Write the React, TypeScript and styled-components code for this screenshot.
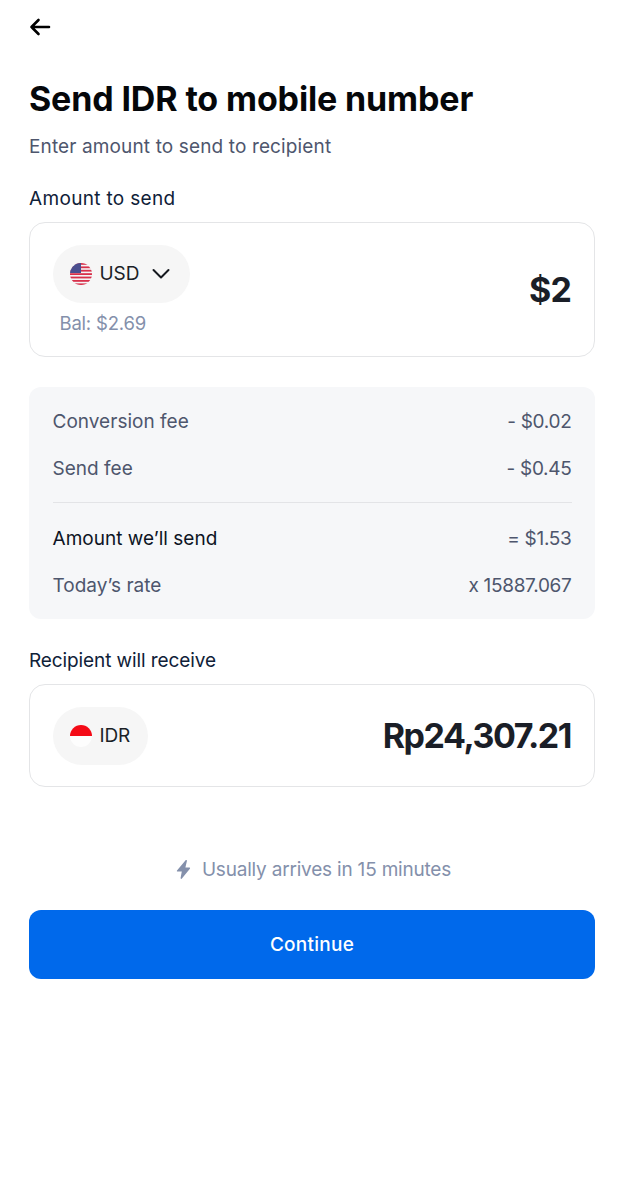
import React from "react";
import styled, { createGlobalStyle } from "styled-components";

const Global = createGlobalStyle`
  html, body { margin: 0; padding: 0; background: #fff; }
  body { font-family: Inter, "Noto Sans", sans-serif; }
`;

const Page = styled.main`
  width: 624px;
  height: 1200px;
  box-sizing: border-box;
  padding: 15px 29px 0 29px;
  display: flex;
  flex-direction: column;
  color: #0d1117;
`;

const BackButton = styled.button`
  width: 22px;
  height: 24px;
  padding: 0;
  border: 0;
  background: none;
  display: flex;
  align-items: center;
  color: #000;
`;

const Title = styled.h1`
  margin: 38px 0 0;
  font-size: 34px;
  line-height: 44px;
  font-weight: 700;
  letter-spacing: -0.14px;
  color: #05070a;
`;

const Subtitle = styled.p`
  margin: 13px 0 0;
  font-size: 19px;
  line-height: 26px;
  letter-spacing: 0.13px;
  color: #4e566d;
`;

const FieldLabel = styled.div<{ $top: number; $track: number }>`
  margin-top: ${(p) => p.$top}px;
  font-size: 19px;
  line-height: 26px;
  letter-spacing: ${(p) => p.$track}px;
  color: #0f2138;
`;

const AmountCard = styled.section<{ $height: number }>`
  margin-top: 10px;
  height: ${(p) => p.$height}px;
  box-sizing: border-box;
  border: 1.5px solid #e4e5e7;
  border-radius: 16px;
  padding: 0 23px 0 22.5px;
  display: flex;
  align-items: center;
  justify-content: space-between;
`;

const CurrencyColumn = styled.div`
  display: flex;
  flex-direction: column;
  align-items: flex-start;
`;

const CurrencyPill = styled.div`
  height: 58px;
  box-sizing: border-box;
  padding: 0 18px 0 17px;
  border-radius: 29px;
  background: #f6f6f6;
  display: flex;
  align-items: center;
  font-size: 19px;
  letter-spacing: -0.1px;
  color: #1b1f27;
`;

const FlagIcon = styled.svg`
  width: 22px;
  height: 22px;
  margin-right: 8px;
  flex: none;
`;

const Chevron = styled.svg`
  width: 20px;
  height: 20px;
  margin-left: 12px;
  margin-right: 1px;
  flex: none;
`;

const Balance = styled.div`
  margin: 8px 0 0 7px;
  font-size: 18.5px;
  line-height: 24px;
  letter-spacing: -0.2px;
  color: #8490ab;
`;

const BigAmount = styled.div<{ $tight?: boolean }>`
  font-size: 34px;
  font-weight: 700;
  letter-spacing: ${(p) => (p.$tight ? "-1.45px" : "-0.9px")};
  color: #1a1e27;
`;

const FeePanel = styled.section`
  margin-top: 30px;
  height: 232px;
  box-sizing: border-box;
  padding: 11px 23.5px 0;
  background: #f6f7f9;
  border-radius: 12px;
  display: flex;
  flex-direction: column;
`;

const FeeRow = styled.div<{ $strong?: boolean }>`
  height: 47px;
  display: flex;
  align-items: center;
  justify-content: space-between;
  font-size: 19px;
  letter-spacing: 0.02px;
  color: ${(p) => (p.$strong ? "#0d1424" : "#4e566d")};
`;

const FeeValue = styled.span`
  color: #4e566d;
  letter-spacing: -0.3px;
`;

const Divider = styled.hr`
  margin: 10px 0 11.5px;
  border: 0;
  height: 1px;
  background: #e3e4e7;
`;

const ArrivalNote = styled.div`
  margin-top: 69px;
  height: 26px;
  padding-left: 2px;
  display: flex;
  align-items: center;
  justify-content: center;
  gap: 10px;
  font-size: 19px;
  letter-spacing: -0.2px;
  color: #8490ab;
`;

const BoltIcon = styled.svg`
  width: 17px;
  height: 21px;
  flex: none;
`;

const PrimaryButton = styled.button`
  margin-top: 28px;
  height: 69px;
  border: 0;
  border-radius: 12px;
  background: #0069eb;
  color: #fff;
  font-family: inherit;
  font-size: 19px;
  font-weight: 500;
  letter-spacing: 0.25px;
`;

const UsFlag = () => (
  <FlagIcon viewBox="0 0 22 22" aria-hidden="true">
    <defs>
      <clipPath id="us-disc">
        <circle cx="11" cy="11" r="11" />
      </clipPath>
    </defs>
    <g clipPath="url(#us-disc)">
      <rect width="22" height="22" fill="#f4f4f6" />
      {[0, 3.4, 6.8, 10.2, 13.6, 17, 20.4].map((y) => (
        <rect key={y} x="0" y={y} width="22" height="1.8" fill="#d8304a" />
      ))}
      <rect width="11" height="10" fill="#4a4f8f" />
    </g>
  </FlagIcon>
);

const IdFlag = () => (
  <FlagIcon viewBox="0 0 22 22" aria-hidden="true">
    <path d="M0 11a11 11 0 0 1 22 0z" fill="#f40a16" />
    <path d="M0 11a11 11 0 0 0 22 0z" fill="#fdfdfd" />
  </FlagIcon>
);

export default function App() {
  return (
    <>
      <Global />
      <Page>
        <BackButton aria-label="Back">
          <svg width="22" height="20" viewBox="0 0 22 20" fill="none" stroke="currentColor" strokeWidth="2.6" strokeLinecap="round" strokeLinejoin="round">
            <path d="M20 10H2.5M9.5 3l-7 7 7 7" />
          </svg>
        </BackButton>
        <Title>Send IDR to mobile number</Title>
        <Subtitle>Enter amount to send to recipient</Subtitle>

        <FieldLabel $top={26} $track={0.33}>Amount to send</FieldLabel>
        <AmountCard $height={135}>
          <CurrencyColumn>
            <CurrencyPill>
              <UsFlag />
              USD
              <Chevron viewBox="0 0 20 20" fill="none" stroke="#15181e" strokeWidth="2" strokeLinecap="round" strokeLinejoin="round">
                <path d="M2.5 6l7.5 7.5L17.5 6" />
              </Chevron>
            </CurrencyPill>
            <Balance>Bal: $2.69</Balance>
          </CurrencyColumn>
          <BigAmount>$2</BigAmount>
        </AmountCard>

        <FeePanel>
          <FeeRow>
            <span>Conversion fee</span>
            <FeeValue>- $0.02</FeeValue>
          </FeeRow>
          <FeeRow>
            <span>Send fee</span>
            <FeeValue>- $0.45</FeeValue>
          </FeeRow>
          <Divider />
          <FeeRow $strong>
            <span>Amount we’ll send</span>
            <FeeValue>= $1.53</FeeValue>
          </FeeRow>
          <FeeRow>
            <span>Today’s rate</span>
            <FeeValue>x 15887.067</FeeValue>
          </FeeRow>
        </FeePanel>

        <FieldLabel $top={29} $track={-0.1}>Recipient will receive</FieldLabel>
        <AmountCard $height={103}>
          <CurrencyPill>
            <IdFlag />
            IDR
          </CurrencyPill>
          <BigAmount $tight>Rp24,307.21</BigAmount>
        </AmountCard>

        <ArrivalNote>
          <BoltIcon viewBox="0 0 17 21" aria-hidden="true">
            <path d="M10.6 1.2 2 11.4c-.4.5-.1 1.2.6 1.2h4.2L5.6 19c-.1.8.8 1.2 1.300.6l8-9.800c.4-.5.1-1.200-.6-1.200H10.400l1.500-6.700c.2-.8-.8-1.300-1.300-.7z" fill="#8490ab" />
          </BoltIcon>
          Usually arrives in 15 minutes
        </ArrivalNote>
        <PrimaryButton>Continue</PrimaryButton>
      </Page>
    </>
  );
}
